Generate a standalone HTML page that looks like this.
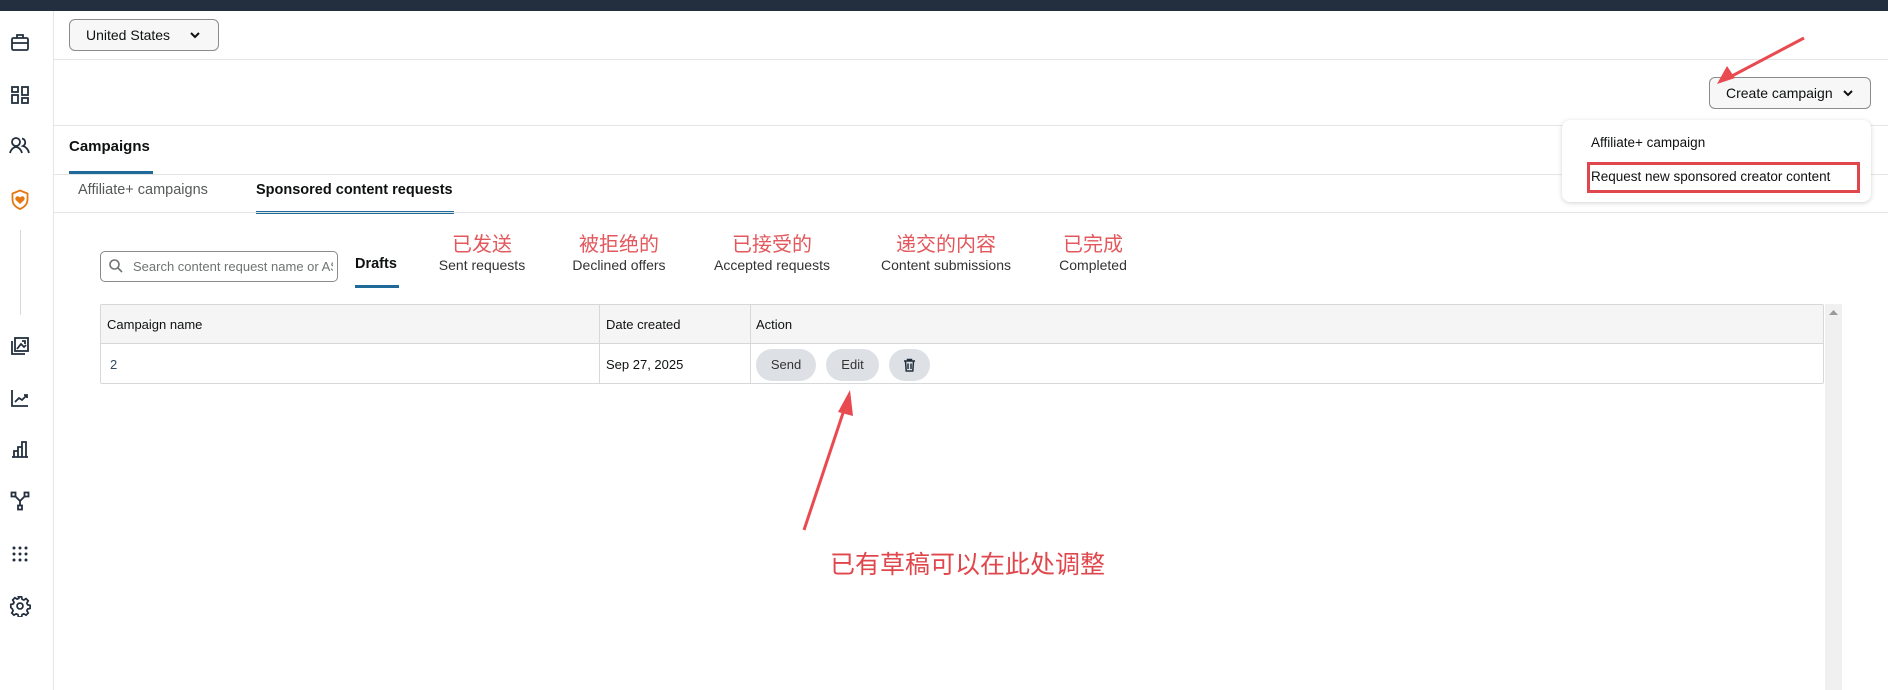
<!DOCTYPE html>
<html><head><meta charset="utf-8"><style>
*{margin:0;padding:0;box-sizing:border-box}
body{width:1888px;height:690px;overflow:hidden;background:#fff;font-family:"Liberation Sans","Noto Sans CJK SC",sans-serif;color:#0f1111;position:relative}
.a{position:absolute}
.t{position:absolute;white-space:nowrap}
.line{position:absolute;background:#e3e6e6;height:1px}
.cn{position:absolute;color:#e2585c;font-size:20px;white-space:nowrap;font-family:"Noto Sans CJK SC",sans-serif;transform:translateX(-50%)}
.lb{position:absolute;color:#333;font-size:14px;white-space:nowrap;transform:translateX(-50%)}
.pill{position:absolute;background:#dde1e6;border-radius:16px;font-size:13px;color:#333;text-align:center;line-height:32px;height:32px;top:349px}
svg{position:absolute}
</style></head><body>
<div class="a" style="left:0;top:0;width:1888px;height:11px;background:#232f3e"></div>
<div class="a" style="left:53px;top:11px;width:1px;height:679px;background:#e3e6e6"></div>
<svg style="left:10px;top:32px" width="20" height="20" viewBox="0 0 20 20" fill="none" stroke="#232f3e" stroke-width="1.8"><rect x="2" y="6" width="16" height="12" rx="1.5"/><path d="M7 6V3h6v3M2 11h16M9 11h2"/></svg>
<svg style="left:10px;top:85px" width="20" height="20" viewBox="0 0 20 20" fill="none" stroke="#232f3e" stroke-width="1.8"><rect x="2" y="2" width="6" height="5"/><rect x="2" y="10" width="6" height="8"/><rect x="12" y="2" width="6" height="8"/><rect x="12" y="13" width="6" height="5"/></svg>
<svg style="left:9px;top:136px" width="22" height="20" viewBox="0 0 22 20" fill="none" stroke="#232f3e" stroke-width="1.8"><circle cx="7" cy="6" r="4"/><path d="M1 17c1-4 4-6 6-6s5 2 6 6"/><path d="M13 2.5a4 4 0 0 1 1 7.5c2 .5 5 2.5 6 7"/></svg>
<svg style="left:10px;top:189px" width="20" height="21" viewBox="0 0 20 21" fill="none"><path d="M10 1.5l7.5 3v6c0 5-4 8-7.5 9.5C6.5 18.5 2.5 15.5 2.5 10.5v-6z" stroke="#e47911" stroke-width="1.8"/><path d="M10 15l-4-3.8c-1.5-1.6-.3-4 1.6-4 1 0 1.8.6 2.4 1.4.6-.8 1.4-1.4 2.4-1.4 1.9 0 3.1 2.4 1.6 4z" fill="#e47911"/></svg>
<div class="a" style="left:20px;top:230px;width:1px;height:85px;background:#d5d9d9"></div>
<svg style="left:10px;top:336px" width="20" height="20" viewBox="0 0 20 20" fill="none" stroke="#232f3e" stroke-width="1.8"><rect x="5" y="2" width="13" height="13"/><path d="M2 5v13h13M7 13l4-5 3 3 2-2M12 5h3v3"/></svg>
<svg style="left:10px;top:388px" width="20" height="20" viewBox="0 0 20 20" fill="none" stroke="#232f3e" stroke-width="1.8"><path d="M2 2v16h16M5 14l4-4 3 2 5-5M14 7h3v3"/></svg>
<svg style="left:10px;top:439px" width="20" height="20" viewBox="0 0 20 20" fill="none" stroke="#232f3e" stroke-width="1.8"><path d="M2 18h16M4 18v-6h4v6M8 18V8h4v10M12 18V3h4v15"/></svg>
<svg style="left:10px;top:491px" width="20" height="20" viewBox="0 0 20 20" fill="none" stroke="#232f3e" stroke-width="1.8"><rect x="1.5" y="1.5" width="4" height="4"/><rect x="14.5" y="1.5" width="4" height="4"/><rect x="8" y="14.5" width="4" height="4"/><path d="M5 5l5 5 5-5M10 10v4.5"/></svg>
<svg style="left:10px;top:544px" width="20" height="20" viewBox="0 0 20 20" fill="#232f3e"><circle cx="4" cy="4" r="1.5"/><circle cx="10" cy="4" r="1.5"/><circle cx="16" cy="4" r="1.5"/><circle cx="4" cy="10" r="1.5"/><circle cx="10" cy="10" r="1.5"/><circle cx="16" cy="10" r="1.5"/><circle cx="4" cy="16" r="1.5"/><circle cx="10" cy="16" r="1.5"/><circle cx="16" cy="16" r="1.5"/></svg>
<svg style="left:9px;top:595px" width="22" height="22" viewBox="0 0 24 24" fill="none" stroke="#232f3e" stroke-width="1.9"><circle cx="12" cy="12" r="3.2"/><path d="M10.3 2h3.4l.6 2.7 1.9.8 2.4-1.5 2.4 2.4-1.5 2.4.8 1.9 2.7.6v3.4l-2.7.6-.8 1.9 1.5 2.4-2.4 2.4-2.4-1.5-1.9.8-.6 2.7h-3.4l-.6-2.7-1.9-.8-2.4 1.5-2.4-2.4 1.5-2.4-.8-1.9L2 13.7v-3.4l2.7-.6.8-1.9L4 5.4 6.4 3l2.4 1.5 1.9-.8z"/></svg>

<div class="a" style="left:69px;top:19px;width:150px;height:32px;border:1px solid #888c8c;border-radius:6px;background:#f7f7f7"></div>
<div class="t" style="left:86px;top:27px;font-size:14px;color:#0f1111">United States</div>
<svg style="left:189px;top:30px" width="12" height="10" viewBox="0 0 12 10" fill="none" stroke="#0f1111" stroke-width="2"><path d="M2 3l4 4 4-4"/></svg>
<div class="line" style="left:54px;top:59px;width:1834px"></div>

<div class="a" style="left:1709px;top:77px;width:162px;height:32px;border:1px solid #888c8c;border-radius:6px;background:#f7f7f7"></div>
<div class="t" style="left:1726px;top:85px;font-size:14px">Create campaign</div>
<svg style="left:1842px;top:88px" width="12" height="10" viewBox="0 0 12 10" fill="none" stroke="#0f1111" stroke-width="2"><path d="M2 3l4 4 4-4"/></svg>

<div class="line" style="left:54px;top:125px;width:1834px"></div>
<div class="t" style="left:69px;top:138px;font-size:15px;font-weight:bold">Campaigns</div>
<div class="a" style="left:69px;top:171px;width:84px;height:3px;background:#1f6a99"></div>
<div class="line" style="left:54px;top:174px;width:1834px"></div>
<div class="t" style="left:78px;top:182px;font-size:14.5px;color:#565959">Affiliate+ campaigns</div>
<div class="t" style="left:256px;top:182px;font-size:14.5px;font-weight:bold;color:#0f1111">Sponsored content requests</div>
<div class="a" style="left:256px;top:211px;width:198px;height:3px;background:#1f6a99"></div>
<div class="line" style="left:54px;top:212px;width:1834px"></div>

<div class="a" style="left:1562px;top:120px;width:309px;height:82px;background:#fff;border-radius:8px;box-shadow:0 1px 5px rgba(0,0,0,.18)"></div>
<div class="t" style="left:1591px;top:135px;font-size:13.5px">Affiliate+ campaign</div>
<div class="a" style="left:1587px;top:162px;width:273px;height:31px;border:3px solid #e0474c"></div>
<div class="t" style="left:1591px;top:169px;font-size:13.5px">Request new sponsored creator content</div>

<div class="a" style="left:100px;top:251px;width:238px;height:31px;border:1px solid #888c8c;border-radius:5px"></div>
<svg style="left:108px;top:258px" width="16" height="16" viewBox="0 0 16 16" fill="none" stroke="#6f7373" stroke-width="1.6"><circle cx="6.5" cy="6.5" r="4.5"/><path d="M10 10l4 4"/></svg>
<div class="t" style="left:133px;top:259px;width:200px;overflow:hidden;font-size:13px;color:#6f7373">Search content request name or ASIN</div>
<div class="t" style="left:355px;top:256px;font-size:14.5px;font-weight:bold">Drafts</div>
<div class="a" style="left:355px;top:285px;width:44px;height:3px;background:#1f6a99"></div>
<div class="cn" style="left:482px;top:228px">已发送</div><div class="lb" style="left:482px;top:257px">Sent requests</div>
<div class="cn" style="left:619px;top:228px">被拒绝的</div><div class="lb" style="left:619px;top:257px">Declined offers</div>
<div class="cn" style="left:772px;top:228px">已接受的</div><div class="lb" style="left:772px;top:257px">Accepted requests</div>
<div class="cn" style="left:946px;top:228px">递交的内容</div><div class="lb" style="left:946px;top:257px">Content submissions</div>
<div class="cn" style="left:1093px;top:228px">已完成</div><div class="lb" style="left:1093px;top:257px">Completed</div>

<div class="a" style="left:100px;top:304px;width:1724px;height:80px;border:1px solid #d5d9d9;border-radius:2px"></div>
<div class="a" style="left:101px;top:305px;width:1722px;height:39px;background:#f5f5f5;border-bottom:1px solid #d5d9d9"></div>
<div class="a" style="left:599px;top:305px;width:1px;height:78px;background:#d5d9d9"></div>
<div class="a" style="left:750px;top:305px;width:1px;height:78px;background:#d5d9d9"></div>
<div class="t" style="left:107px;top:317px;font-size:13px">Campaign name</div>
<div class="t" style="left:606px;top:317px;font-size:13px">Date created</div>
<div class="t" style="left:756px;top:317px;font-size:13px">Action</div>
<div class="t" style="left:110px;top:357px;font-size:13px;color:#2b4a66">2</div>
<div class="t" style="left:606px;top:357px;font-size:13px">Sep 27, 2025</div>
<div class="pill" style="left:756px;width:60px">Send</div>
<div class="pill" style="left:826px;width:53px">Edit</div>
<div class="pill" style="left:889px;width:41px"></div>
<svg style="left:903px;top:358px" width="13" height="14" viewBox="0 0 13 14" fill="none" stroke="#232f3e" stroke-width="1.5"><path d="M1 3h11M4.5 3V1.5h4V3M2.5 3l.7 10h6.6l.7-10M5 5.5v5.5M8 5.5v5.5"/></svg>
<div class="a" style="left:1825px;top:304px;width:17px;height:386px;background:#f0f0f0"></div>
<svg style="left:1829px;top:309px" width="9" height="6"><path d="M0 6L4.5 1 9 6z" fill="#9a9a9a"/></svg>

<svg style="left:0;top:0" width="1888" height="690"><path d="M1804 38L1730 77" stroke="#e84a4f" stroke-width="3"/><path d="M1717 84l10-18 8 12z" fill="#e84a4f"/>
<path d="M804 530L844 410" stroke="#e84a4f" stroke-width="3"/><path d="M850 390l3 26-15-4z" fill="#e84a4f"/></svg>
<div class="t" style="left:830px;top:545px;font-size:25px;color:#e0474c;font-family:'Noto Sans CJK SC',sans-serif">已有草稿可以在此处调整</div>
</body></html>
